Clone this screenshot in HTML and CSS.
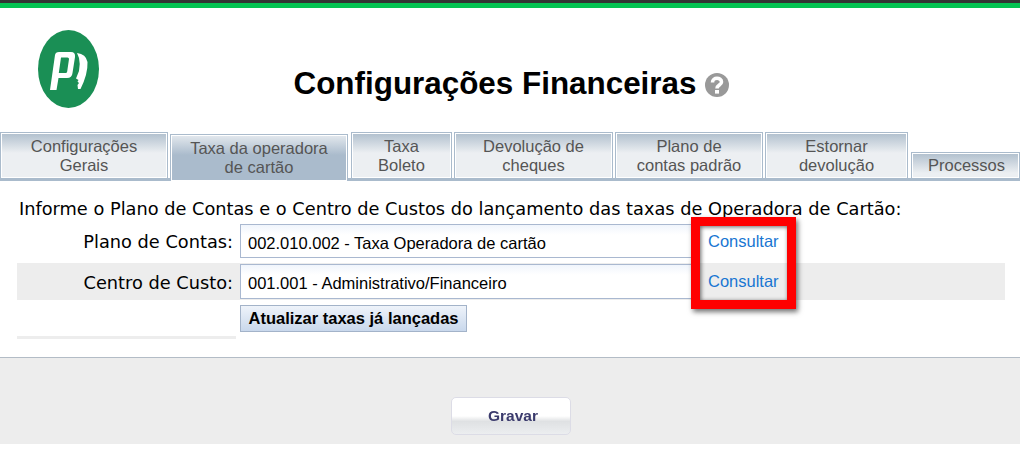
FILE: index.html
```html
<!DOCTYPE html>
<html lang="pt-BR">
<head>
<meta charset="utf-8">
<title>Configurações Financeiras</title>
<link rel="stylesheet" href="styles.css">
</head>
<body>
<div class="topbar"></div>
<header class="header">
  <svg class="logo" viewBox="0 0 61 78" aria-label="Logo">
    <ellipse cx="30.5" cy="39" rx="30.5" ry="39" fill="#1a8f55"/>
    <path fill="#fff" fill-rule="evenodd" d="M17 25 Q17.500 22 21 22 H33 Q37.500 22 37 27 L34.500 43 Q34 48 29 48 H20.500 L18.500 60 H12 Z M23 27.500 L20.800 43 H27.500 Q29 43 29.200 41.500 L31 29 Q31.100 27.500 29.500 27.500 Z"/>
    <path fill="#fff" d="M39 23 Q48 24 49.500 32 Q50 44 42.500 59 L40 59 L39.500 55 L41 53 L39.500 51.500 L40.500 50 L38 48.500 L41 41 Q42.500 34 41 28 Z"/>
  </svg>
  <h1 class="title">Configurações Financeiras</h1>
  <svg class="help" viewBox="0 0 24 24" aria-label="Ajuda">
    <circle cx="12" cy="12" r="12" fill="#999"/>
    <path fill="none" stroke="#fff" stroke-width="3.600" d="M7.500 9.500 C7.500 3.800 16.500 4.200 16.500 9 C16.500 12.200 12 12 12 15.500"/>
    <rect x="10" y="17" width="4" height="3.600" fill="#fff"/>
  </svg>
</header>
<nav class="tabs">
  <a class="tab tab-1">Configurações<br>Gerais</a>
  <a class="tab tab-2 active">Taxa da operadora<br>de cartão</a>
  <a class="tab tab-3">Taxa<br>Boleto</a>
  <a class="tab tab-4">Devolução de<br>cheques</a>
  <a class="tab tab-5">Plano de<br>contas padrão</a>
  <a class="tab tab-6">Estornar<br>devolução</a>
  <a class="tab tab-7">Processos</a>
</nav>
<main class="content">
  <p class="intro">Informe o Plano de Contas e o Centro de Custos do lançamento das taxas de Operadora de Cartão:</p>
  <div class="form">
    <div class="row">
      <label class="label">Plano de Contas:</label>
      <div class="field">002.010.002 - Taxa Operadora de cartão</div>
      <a class="link">Consultar</a>
    </div>
    <div class="row alt">
      <label class="label">Centro de Custo:</label>
      <div class="field">001.001 - Administrativo/Financeiro</div>
      <a class="link">Consultar</a>
    </div>
    <div class="row-action">
      <div class="strip-cell"><div class="strip"></div></div>
      <button class="update">Atualizar taxas já lançadas</button>
    </div>
    <div class="highlight"></div>
  </div>
</main>
<footer class="footer">
  <button class="save">Gravar</button>
</footer>
</body>
</html>
```

FILE: styles.css
```css
* { box-sizing: border-box; }
html, body { margin: 0; padding: 0; }
body { background: #fff; font-family: "Liberation Sans", Arial, sans-serif; height: 451px; overflow: hidden; }
.topbar { height: 8px; background: #05c252; border-top: 3px solid #333; }
.header { height: 124px; position: relative; display: flex; justify-content: center; align-items: flex-start; padding-top: 57px; padding-left: 3px; }
.logo { position: absolute; left: 38px; top: 22px; width: 61px; height: 78px; }
.title { margin: 0; font-size: 31.4px; line-height: 38px; font-weight: 700; color: #000; }
.help { width: 24px; height: 24px; margin: 8px 0 0 9px; }
.tabs { display: flex; align-items: flex-end; height: 49px; border-bottom: 3px solid #aabbcc; gap: 2px; }
.tab { flex: none; height: 46px; border: 1px solid #aabbcc; border-bottom: 0; box-shadow: inset 0 0 0 1px #fff; background: linear-gradient(#b0bfcd 0, #eceff2 20px, #eceff2 100%); font-size: 16.5px; line-height: 19px; color: #555; text-align: center; padding-top: 4px; }
.tab-1 { width: 168px; }
.tab-2 { width: 178px; height: 47px; margin-bottom: -3px; background: linear-gradient(#e4e9ee 0, #aabbcc 20px); }
.tab-3 { width: 101px; margin-left: 1px; }
.tab-4 { width: 159px; }
.tab-5 { width: 148px; }
.tab-6 { width: 143px; }
.tab-7 { width: 109px; height: 26px; margin-left: 1px; padding: 3px 0 0 2px; }
.content { height: 176px; padding: 17px 15px 0 17px; }
.intro { margin: 0 0 0 2px; font-family: "DejaVu Sans", Verdana, sans-serif; font-size: 17.75px; line-height: 22px; color: #000; white-space: nowrap; }
.form { position: relative; margin-top: 3px; }
.row { display: flex; align-items: center; height: 36px; margin-bottom: 4px; }
.alt { background: #ededed; height: 37px; margin-bottom: 2px; }
.label { width: 219px; padding: 2px 3px 0 0; text-align: right; font-family: "DejaVu Sans", Verdana, sans-serif; font-size: 17.75px; color: #000; }
.field { width: 455px; height: 34px; margin-left: 4px; background: linear-gradient(#f0f5fc, #fff 10px); border: 1px solid #a9b8d0; padding: 9px 0 0 7px; font-size: 16.5px; line-height: 18px; color: #000; }
.alt .field { height: 35px; }
.link { padding-left: 13px; font-size: 16.5px; color: #1976d2; }
.row-action { display: flex; align-items: flex-start; margin-top: 5px; }
.strip-cell { width: 219px; height: 34px; display: flex; align-items: flex-end; }
.strip { width: 100%; height: 3px; background: #ededed; }
.update { margin: 0 0 0 4px; width: 227px; height: 27px; padding: 0; border: 1px solid #a3b3c9; background: linear-gradient(#eef3fa, #c9d8ec); font-family: "Liberation Sans", Arial, sans-serif; font-weight: 700; font-size: 16.5px; color: #000; }
.highlight { position: absolute; left: 674px; top: -6px; width: 105px; height: 92px; border: 9px solid #f00; box-shadow: 2px 3px 5px rgba(0,0,0,.55), inset 1px 1px 4px rgba(0,0,0,.6); }
.footer { height: 87px; background: #ededed; border-top: 1px solid #b3bcc6; display: flex; justify-content: center; padding: 39px 0 0 2px; }
.save { width: 120px; height: 38px; padding: 0 0 0 4px; border: 1px solid #dcdce6; border-radius: 5px; background: linear-gradient(#fff 50%, #dfe1e3 65%, #eceef0); font-family: "Liberation Sans", Arial, sans-serif; font-weight: 700; font-size: 15.5px; color: #3b3b6d; filter: blur(.4px); }
```
